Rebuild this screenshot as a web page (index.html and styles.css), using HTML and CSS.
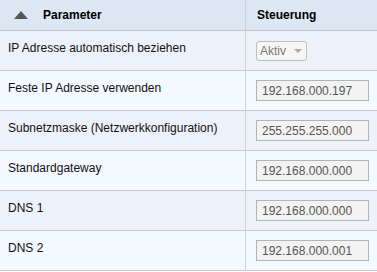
FILE: index.html
```html
<!DOCTYPE html>
<html lang="de">
<head>
<meta charset="utf-8">
<link rel="stylesheet" href="styles.css">
</head>
<body>
<div class="table">
  <div class="row head">
    <div class="cell c1"><span class="sort"></span><span class="htext">Parameter</span></div>
    <div class="cell c2"><span class="htext">Steuerung</span></div>
  </div>
  <div class="row odd">
    <div class="cell c1">IP Adresse automatisch beziehen</div>
    <div class="cell c2"><div class="select"><span>Aktiv</span><span class="arrow"></span></div></div>
  </div>
  <div class="row even">
    <div class="cell c1">Feste IP Adresse verwenden</div>
    <div class="cell c2"><div class="input">192.168.000.197</div></div>
  </div>
  <div class="row odd">
    <div class="cell c1">Subnetzmaske (Netzwerkkonfiguration)</div>
    <div class="cell c2"><div class="input">255.255.255.000</div></div>
  </div>
  <div class="row even">
    <div class="cell c1">Standardgateway</div>
    <div class="cell c2"><div class="input">192.168.000.000</div></div>
  </div>
  <div class="row odd">
    <div class="cell c1">DNS 1</div>
    <div class="cell c2"><div class="input">192.168.000.000</div></div>
  </div>
  <div class="row even">
    <div class="cell c1">DNS 2</div>
    <div class="cell c2"><div class="input">192.168.000.001</div></div>
  </div>
</div>
</body>
</html>
```
FILE: styles.css
```css
html, body {
  margin: 0;
  padding: 0;
  background: #ffffff;
}
body {
  font-family: "Liberation Sans", Arial, sans-serif;
  font-size: 12px;
  color: #111;
}
.table {
  width: 377px;
}
.row {
  display: grid;
  grid-template-columns: 246px 1fr;
  height: 40px;
  box-sizing: border-box;
  border-bottom: 1px solid #c9c9c9;
}
.row.head {
  height: 31px;
  background: #dde7f3;
  border-bottom: 1px solid #c4c4c4;
}
.row.odd { background: #edf2fa; }
.row.even { background: #f4f8ff; }
.cell {
  display: flex;
  align-items: center;
  box-sizing: border-box;
}
.c1 {
  border-right: 1px solid #d2d2d2;
  padding-left: 8px;
  padding-bottom: 5px;
}
.c2 {
  padding-left: 10px;
}
.head .c1, .head .c2 {
  padding-bottom: 1px;
}
.htext {
  font-weight: bold;
  color: #000;
}
.sort {
  width: 0;
  height: 0;
  border-left: 7px solid transparent;
  border-right: 7px solid transparent;
  border-bottom: 8px solid #555;
  margin-left: 6px;
  margin-right: 15px;
}
.head .c2 .htext {
  padding-left: 1px;
}
.input {
  width: 113px;
  height: 21px;
  box-sizing: border-box;
  border: 1px solid #b4b4b4;
  background: #f3f3f3;
  color: #555;
  padding-left: 5px;
  display: flex;
  align-items: center;
  line-height: 1;
}
.select {
  width: 51px;
  height: 20px;
  box-sizing: border-box;
  border: 1px solid #bdbdbd;
  border-radius: 3px;
  background: #f6f6f6;
  color: #777;
  padding-left: 3px;
  display: flex;
  align-items: center;
  gap: 8px;
  margin-bottom: 0;
}
.arrow {
  width: 0;
  height: 0;
  border-left: 4px solid transparent;
  border-right: 4px solid transparent;
  border-top: 4px solid #aaa;
}
```
